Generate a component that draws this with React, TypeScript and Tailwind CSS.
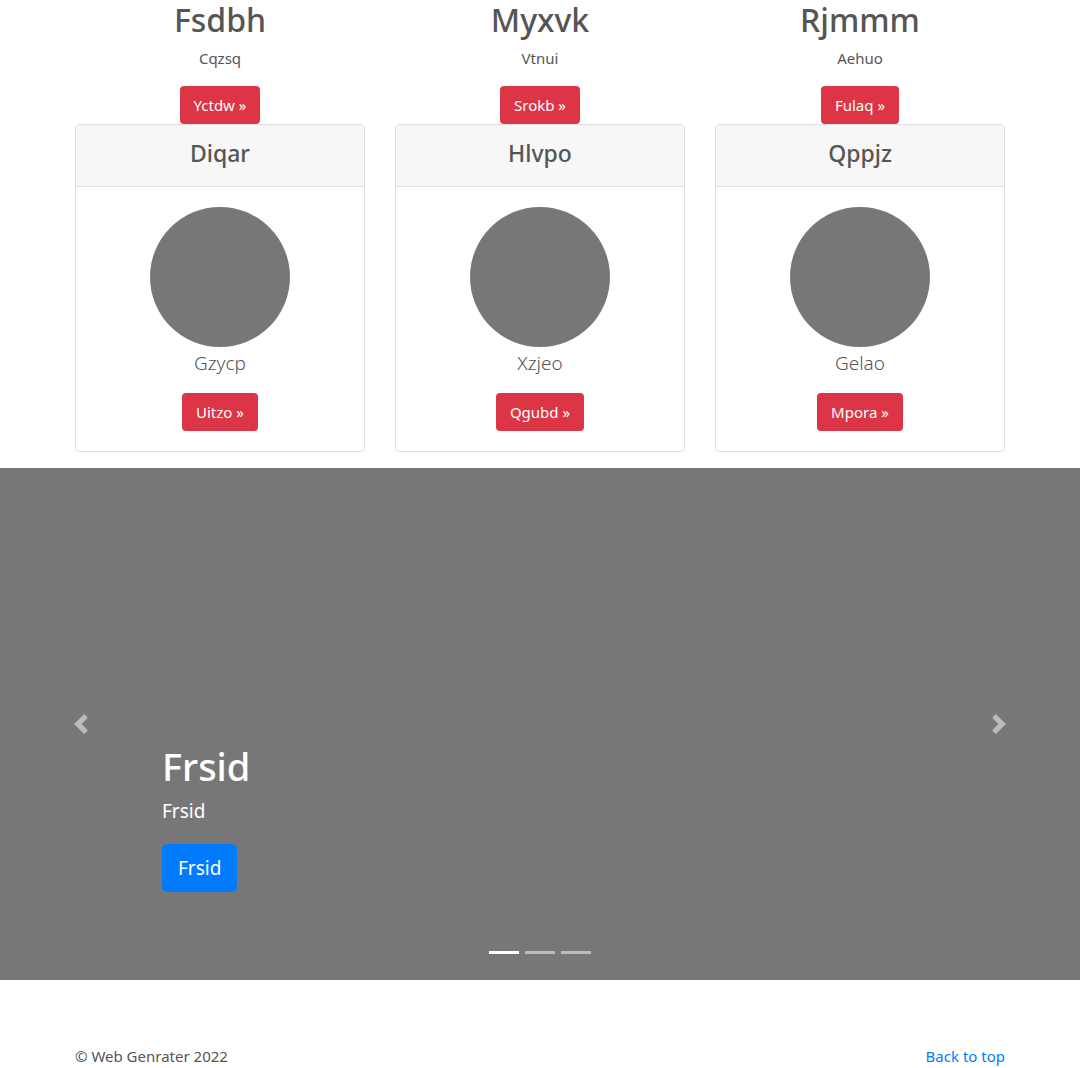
import React from "react";

type Feature = { title: string; text: string; btn: string };
type Member = { name: string; caption: string; btn: string };

const features: Feature[] = [
  { title: "Fsdbh", text: "Cqzsq", btn: "Yctdw" },
  { title: "Myxvk", text: "Vtnui", btn: "Srokb" },
  { title: "Rjmmm", text: "Aehuo", btn: "Fulaq" },
];

const members: Member[] = [
  { name: "Diqar", caption: "Gzycp", btn: "Uitzo" },
  { name: "Hlvpo", caption: "Xzjeo", btn: "Qgubd" },
  { name: "Qppjz", caption: "Gelao", btn: "Mpora" },
];

function Chevron({ dir }: { dir: "prev" | "next" }) {
  return (
    <svg viewBox="0 0 8 8" className="h-5 w-5 fill-white opacity-50">
      {dir === "prev" ? (
        <path d="M5.25 0l-4 4 4 4 1.5-1.5-2.5-2.5 2.5-2.5-1.5-1.5z" />
      ) : (
        <path d="M2.75 0l-1.5 1.5 2.5 2.5-2.5 2.5 1.5 1.5 4-4-4-4z" />
      )}
    </svg>
  );
}

export default function App() {
  return (
    <main
      className="min-h-screen bg-white text-[#555]"
      style={{ fontFamily: '"Noto Sans", "Open Sans", sans-serif' }}
    >
      {/* ===== FEATURE COLUMNS + CARDS ===== */}
      <div className="mx-auto w-[960px] px-[15px]">
        <div className="grid grid-cols-3 gap-[30px]">
          {features.map((f, i) => (
            <div key={f.title} className="flex flex-col items-center">
              <h2 className="text-[32px] font-medium leading-[40px]">
                {f.title}
              </h2>
              <p className="mt-1.5 text-[15px] leading-6">{f.text}</p>
              <button className="mt-4 h-[38px] rounded bg-[#dc3545] px-[14px] text-[15px] text-white">
                {f.btn} »
              </button>
              <div className="w-full rounded border border-[#dfdfdf]">
                <div className="flex h-[62px] items-center justify-center border-b border-[#dfdfdf] bg-[#f7f7f7]">
                  <h4 className="-mt-1 text-[23px] font-medium leading-[1.2]">
                    {members[i].name}
                  </h4>
                </div>
                <div className="flex flex-col items-center px-5 pt-5 pb-5">
                  <div className="h-[140px] w-[140px] rounded-full bg-[#777]" />
                  <p className="mt-px text-[19px] font-light leading-[30px]">
                    {members[i].caption}
                  </p>
                  <button className="mt-[15px] h-[38px] rounded bg-[#dc3545] px-[14px] text-[15px] text-white">
                    {members[i].btn} »
                  </button>
                </div>
              </div>
            </div>
          ))}
        </div>
      </div>

      {/* ===== CAROUSEL ===== */}
      <section className="relative mt-4 flex h-[512px] bg-[#777]">
        <div className="flex w-[162px] items-center justify-center">
          <Chevron dir="prev" />
        </div>
        <div className="flex flex-1 flex-col justify-end pb-[88px] text-white">
          <h1 className="text-[38px] font-medium leading-[48px]">Frsid</h1>
          <p className="mt-1.5 text-[19px] leading-[30px]">Frsid</p>
          <div className="mt-[18px]">
            <button className="h-12 rounded-[5px] bg-[#007bff] px-4 text-[19px] text-white">
              Frsid
            </button>
          </div>
        </div>
        <div className="flex w-[162px] items-center justify-center">
          <Chevron dir="next" />
        </div>
        <div className="absolute bottom-[26px] left-0 right-0 flex justify-center gap-1.5">
          <span className="h-[3px] w-[30px] bg-white" />
          <span className="h-[3px] w-[30px] bg-white/50" />
          <span className="h-[3px] w-[30px] bg-white/50" />
        </div>
      </section>

      {/* ===== FOOTER ===== */}
      <footer className="mx-auto mt-4 flex w-[960px] justify-between px-[15px] py-12 text-[15px] leading-6">
        <p>© Web Genrater 2022</p>
        <a href="#" className="text-[#007bff]">
          Back to top
        </a>
      </footer>
    </main>
  );
}
